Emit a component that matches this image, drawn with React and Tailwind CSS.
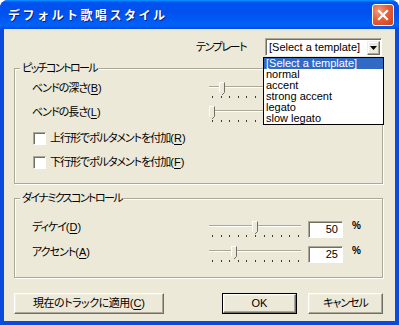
import React from "react";

const items = ["[Select a template]", "normal", "accent", "strong accent", "legato", "slow legato"];

function Slider({ value }) {
  const x = Math.round(3 + (value / 100) * 86);
  const ticks = Array.from({ length: 11 }, (_, i) => Math.round(3 + i * 8.6));
  return (
    <svg width="92" height="24" className="shrink-0">
      <rect x="0" y="10" width="92" height="1" fill="#ACA899" />
      <rect x="0" y="11" width="92" height="1" fill="#FFFFFF" />
      {ticks.map((t, i) => (
        <rect key={i} x={t} y="20" width="1" height="2" fill="#3A3A3A" />
      ))}
      <path d={`M${x - 2} 7 H${x + 2} V16 L${x} 18 L${x - 2} 16 Z`} fill="#ECE9D8" />
      <path d={`M${x - 2.5} 16.5 V6.5 H${x + 2}`} stroke="#FFFFFF" fill="none" />
      <path d={`M${x + 2.5} 6.5 V16.5 L${x} 19`} stroke="#716F64" fill="none" />
    </svg>
  );
}

function Edit({ children }) {
  return (
    <div className="ml-[7px] mt-[6px] flex h-[17px] w-[35px] shrink-0 items-center justify-end self-start border border-t-[#ACA899] border-l-[#ACA899] border-r-[#FFFFFF] border-b-[#FFFFFF] bg-white pr-[4px] shadow-[inset_1px_1px_0_#716F64]">
      {children}
    </div>
  );
}

function Mn({ k }) {
  return (
    <span className="tracking-normal">
      (<span className="underline underline-offset-2">{k}</span>)
    </span>
  );
}

function SliderRow({ label, mnemonic, thumb, value, className = "" }) {
  return (
    <div className={`flex h-[24px] items-center pl-[17px] ${className}`}>
      <span className="w-[177px] shrink-0 tracking-[-1px]">
        {label}
        <Mn k={mnemonic} />
      </span>
      <Slider value={thumb} />
      <Edit>{value}</Edit>
      <span className="ml-[9px] mb-[3px] text-[10px] font-bold">%</span>
    </div>
  );
}

function Check({ label, mnemonic, className = "" }) {
  return (
    <div className={`flex h-[24px] items-center pl-[18px] ${className}`}>
      <span className="h-[13px] w-[13px] shrink-0 border border-t-[#ACA899] border-l-[#ACA899] border-r-[#FFFFFF] border-b-[#FFFFFF] bg-white shadow-[inset_1px_1px_0_#716F64]" />
      <span className="ml-[4px] tracking-[-1px]">
        {label}
        <Mn k={mnemonic} />
      </span>
    </div>
  );
}

function Group({ title, className = "", children }) {
  return (
    <div className={`ml-[10px] flex w-[369px] flex-col border border-[#ACA899] shadow-[inset_1px_1px_0_#FFFFFF,1px_1px_0_#FFFFFF] ${className}`}>
      <span className="-mt-[8px] ml-[5px] flex h-[14px] w-fit items-center bg-[#ECE9D8] px-[2px] tracking-[-1.6px]">{title}</span>
      {children}
    </div>
  );
}

function Button({ children, className = "", isDefault = false }) {
  const inner = (
    <div className="flex h-full w-full items-center justify-center border border-t-[#FFFFFF] border-l-[#FFFFFF] border-r-[#716F64] border-b-[#716F64] bg-[#ECE9D8] shadow-[inset_-1px_-1px_0_#ACA899,inset_1px_1px_0_#F1EFE2]">
      {children}
    </div>
  );
  return (
    <div className={`h-[21px] shrink-0 ${isDefault ? "border border-black" : ""} ${className}`}>{inner}</div>
  );
}

export default function App() {
  return (
    <div className="flex h-[325px] w-[399px] flex-col overflow-hidden rounded-t-[8px] bg-[#0A4BDD] font-['Liberation_Sans','Noto_Sans_CJK_JP',sans-serif] text-[11px] text-black [font-feature-settings:'palt']">
      {/* title bar */}
      <div className="flex h-[29px] shrink-0 items-center bg-[linear-gradient(180deg,#0997ff,#0053ee_8%,#0050ee_40%,#0062f6_88%,#0059ee_93%,#004be3_100%)] pl-[8px] pr-[5px]">
        <span className="flex-1 font-['Noto_Sans_CJK_JP',sans-serif] text-[12px] font-bold tracking-[2.5px] text-white [font-feature-settings:normal] [text-shadow:1px_1px_0_#0A1E8A]">
          デフォルト歌唱スタイル
        </span>
        <div className="flex h-[22px] w-[22px] items-center justify-center rounded-[3px] border border-white bg-[radial-gradient(circle_at_30%_30%,#F49A7E,#E5603A_45%,#C8401A)]">
          <svg width="12" height="12" viewBox="0 0 12 12">
            <path d="M2 2 L10 10 M10 2 L2 10" stroke="#FFFFFF" strokeWidth="2.2" strokeLinecap="square" />
          </svg>
        </div>
      </div>

      {/* client */}
      <div className="mx-[4px] mb-[4px] flex flex-1 flex-col bg-[#ECE9D8]">
        <div className="mt-[9px] flex h-[18px] items-center pl-[192px]">
          <span className="w-[69px] shrink-0 tracking-[-1.4px]">テンプレート</span>
          <div className="relative flex h-[18px] w-[117px] items-center border border-t-[#ACA899] border-l-[#ACA899] border-r-[#FFFFFF] border-b-[#FFFFFF] bg-white shadow-[inset_1px_1px_0_#716F64]">
            <span className="flex-1 pl-[3px] pt-[1px]">[Select a template]</span>
            <div className="mr-[1px] mt-[1px] flex h-[14px] w-[13px] items-center justify-center border border-t-[#F1EFE2] border-l-[#F1EFE2] border-r-[#716F64] border-b-[#716F64] bg-[#ECE9D8] shadow-[inset_-1px_-1px_0_#ACA899,inset_1px_1px_0_#FFFFFF]">
              <svg width="7" height="4" viewBox="0 0 7 4">
                <path d="M0 0 H7 L3.5 4 Z" fill="#000" />
              </svg>
            </div>
            <div className="absolute left-[-3px] top-[18px] z-10 flex w-[121px] flex-col border border-black bg-white py-0">
              {items.map((it, i) => (
                <div
                  key={it}
                  className={`flex h-[11px] items-center pl-[2px] leading-none ${i === 0 ? "bg-[#316AC5] text-white" : ""}`}
                >
                  {it}
                </div>
              ))}
            </div>
          </div>
        </div>

        <Group title="ピッチコントロール" className="mt-[12px] h-[116px]">
          <SliderRow label="ベンドの深さ" mnemonic="B" thumb={12} value="0" className="mt-[1px]" />
          <SliderRow label="ベンドの長さ" mnemonic="L" thumb={0} value="0" />
          <Check label="上行形でポルタメントを付加" mnemonic="R" className="mt-[2px]" />
          <Check label="下行形でポルタメントを付加" mnemonic="F" />
        </Group>

        <Group title="ダイナミクスコントロール" className="mt-[14px] h-[80px]">
          <SliderRow label="ディケイ" mnemonic="D" thumb={50} value="50" className="mt-[10px]" />
          <SliderRow label="アクセント" mnemonic="A" thumb={25} value="25" className="mt-[1px]" />
        </Group>

        <div className="ml-[10px] mt-[15px] flex">
          <Button className="w-[150px]">
            <span className="tracking-[-0.5px]">現在のトラックに適用</span>
            <Mn k="C" />
          </Button>
          <Button className="ml-[58px] w-[75px]" isDefault>
            OK
          </Button>
          <Button className="ml-[11px] w-[75px]">
            <span className="tracking-[-1px]">キャンセル</span>
          </Button>
        </div>
      </div>
    </div>
  );
}
